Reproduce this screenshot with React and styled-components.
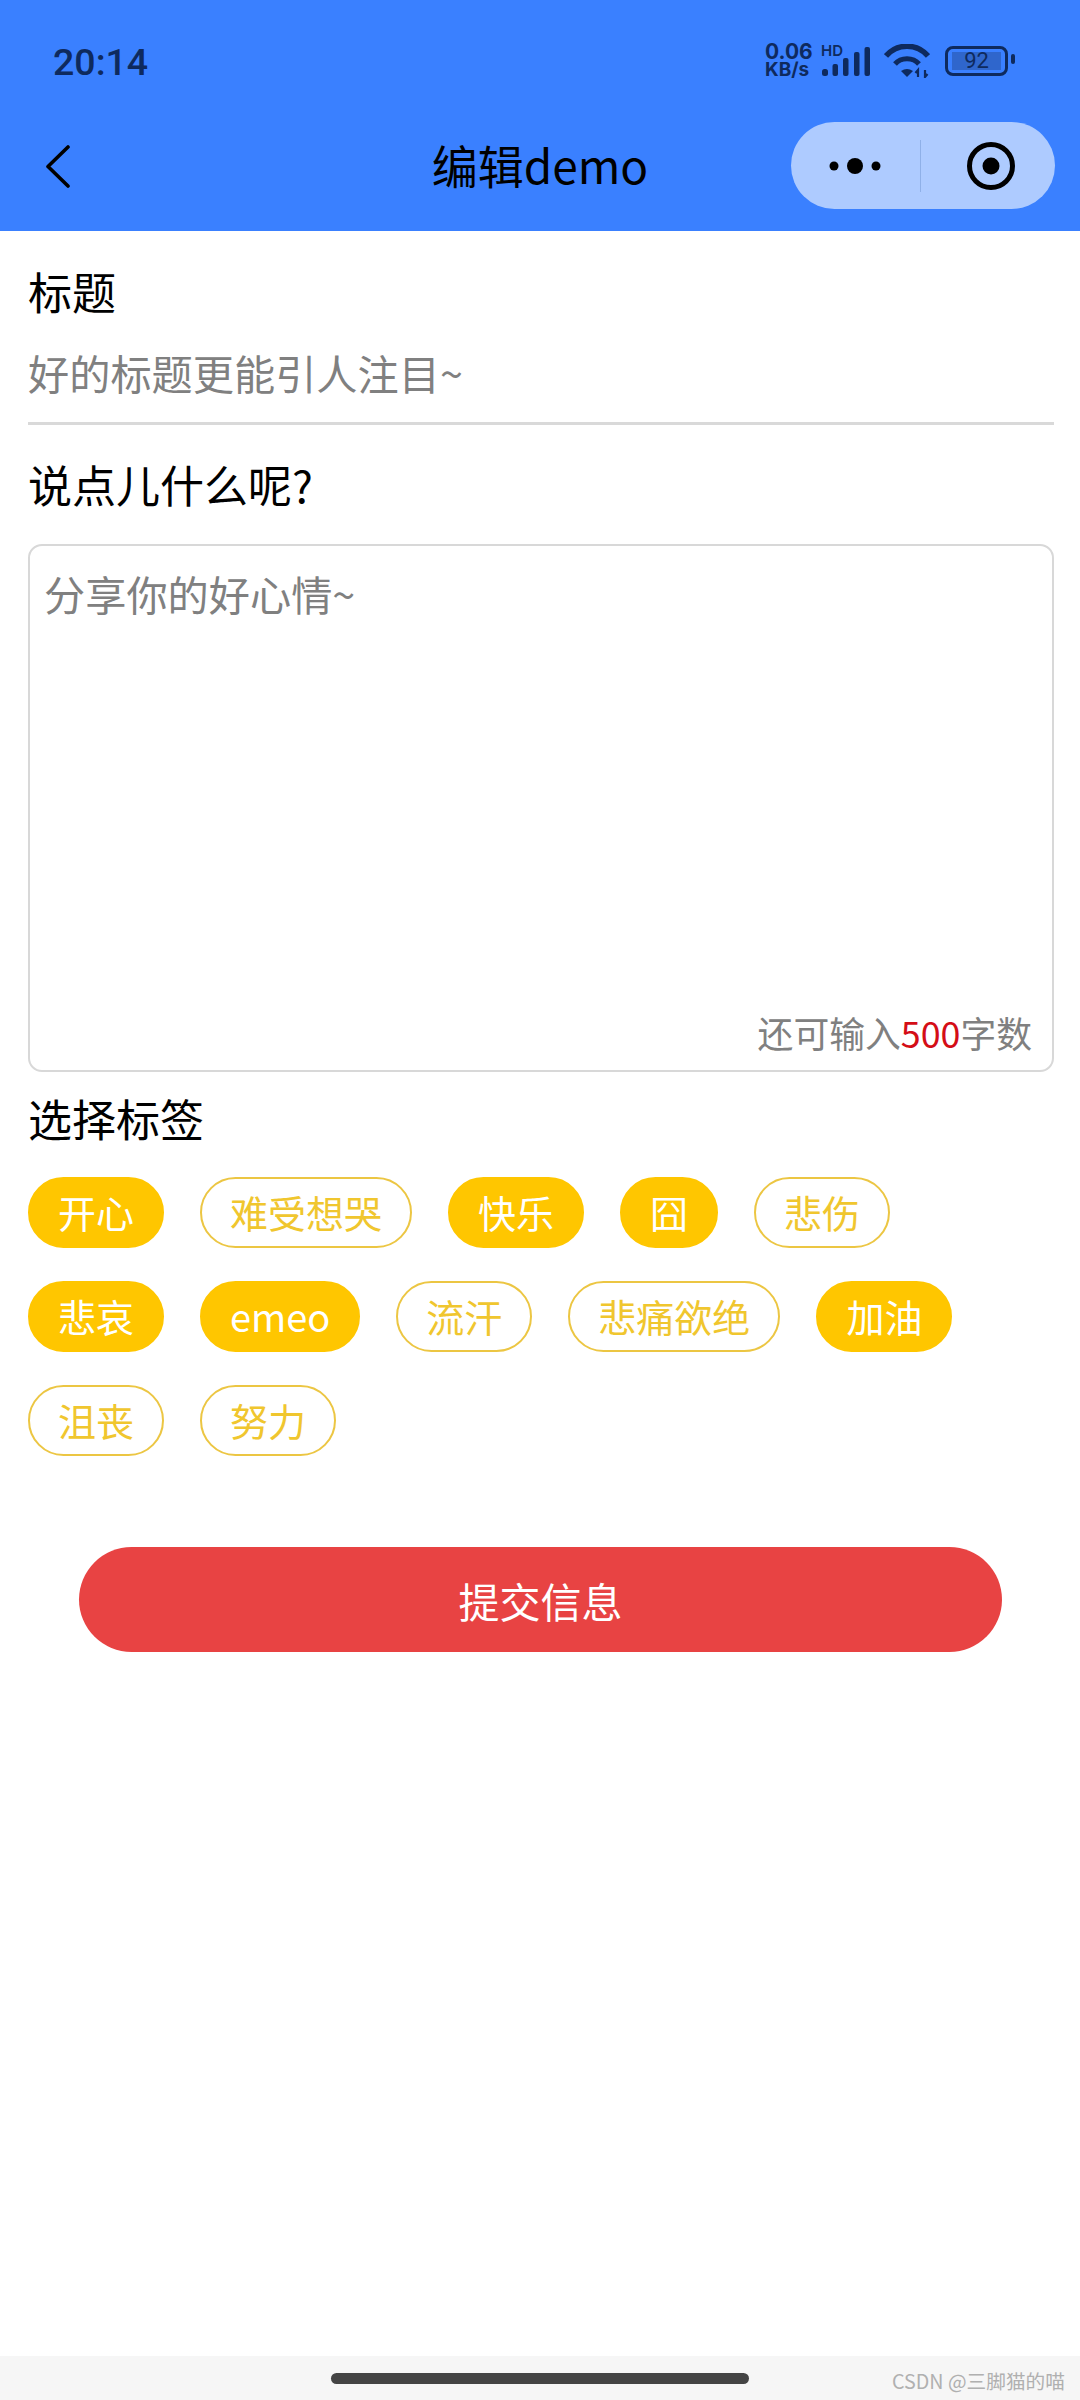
import React from 'react';
import styled, { createGlobalStyle } from 'styled-components';

const FONT = `"Noto Sans CJK SC", "Noto Sans", sans-serif`;
const NAVY = '#0e2a5e';

const GlobalStyle = createGlobalStyle`
  html, body {
    margin: 0;
    padding: 0;
    background: #fff;
  }
  * {
    box-sizing: border-box;
  }
`;

const Page = styled.div`
  width: 1080px;
  min-height: 2400px;
  display: flex;
  flex-direction: column;
  font-family: ${FONT};
  color: #000;
`;

const Header = styled.header`
  height: 231px;
  background: #3a80ff;
  display: flex;
  flex-direction: column;
`;

const StatusBar = styled.div`
  height: 122px;
  padding: 0 72px 0 53px;
  display: flex;
  align-items: center;
  justify-content: space-between;
  color: ${NAVY};
`;

const Time = styled.span`
  font-family: Roboto, sans-serif;
  font-size: 37.5px;
  font-weight: 500;
  line-height: 1;
  margin-top: 3px;
`;

const StatusIcons = styled.div`
  display: flex;
  align-items: center;
`;

const NetSpeed = styled.div`
  width: 50px;
  display: flex;
  flex-direction: column;
  font-family: Inter, sans-serif;
  font-weight: 700;
  line-height: 18px;
  font-size: 21px;
  margin-right: 6px;
  white-space: nowrap;
`;

const NetUnit = styled.span`
  font-size: 19px;
`;

const Battery = styled.div`
  position: relative;
  width: 63px;
  height: 30px;
  margin-left: 15px;
  border: 3px solid ${NAVY};
  border-radius: 8px;
  padding: 3px 4px;
  &::after {
    content: '';
    position: absolute;
    right: -10px;
    top: 5px;
    width: 4px;
    height: 10px;
    border-radius: 2px;
    background: ${NAVY};
  }
`;

const BatteryFill = styled.div`
  height: 100%;
  background: #2f66cc;
  display: flex;
  align-items: center;
  justify-content: center;
  font-family: Roboto, sans-serif;
  font-size: 22px;
  line-height: 1;
  color: ${NAVY};
`;

const NavBar = styled.nav`
  flex: 1;
  display: grid;
  grid-template-columns: 1fr auto 1fr;
  align-items: start;
  padding: 0 25px;
`;

const BackButton = styled.button`
  border: none;
  background: none;
  padding: 0;
  margin: 23px 0 0 21px;
  width: 24px;
  height: 43px;
  display: block;
`;

const Title = styled.h1`
  margin: 12px 0 0;
  font-size: 46px;
  font-weight: 400;
  line-height: 60px;
`;

const Capsule = styled.div`
  justify-self: end;
  width: 264px;
  height: 87px;
  border-radius: 44px;
  background: #aecbff;
  display: flex;
  align-items: center;
`;

const CapsuleSide = styled.div`
  flex: 1;
  display: flex;
  align-items: center;
  justify-content: center;
  & + & {
    height: 52px;
    padding-left: 6px;
    border-left: 1px solid #8fb0e8;
  }
`;

const Main = styled.main`
  flex: 1;
  padding: 0 26px 0 28px;
  display: flex;
  flex-direction: column;
`;

const Label = styled.div`
  font-size: 44px;
  line-height: 60px;
  margin-top: ${(p) => p.$top}px;
`;

const TitleInput = styled.input`
  display: block;
  width: 100%;
  height: 104px;
  padding: 1px 0 0;
  border: none;
  border-bottom: 3px solid #d9d9d9;
  outline: none;
  background: none;
  font-family: ${FONT};
  font-size: 41.2px;
  &::placeholder {
    color: #808080;
    opacity: 1;
  }
`;

const TextBox = styled.div`
  margin-top: 30px;
  height: 528px;
  border: 2px solid #d8d8d8;
  border-radius: 14px;
  display: flex;
  flex-direction: column;
  padding-bottom: 13px;
`;

const TextArea = styled.textarea`
  flex: 1;
  width: 100%;
  padding: 17px 14px 0;
  border: none;
  outline: none;
  resize: none;
  background: none;
  font-family: ${FONT};
  font-size: 41.2px;
  line-height: 60px;
  &::placeholder {
    color: #808080;
    opacity: 1;
  }
`;

const Counter = styled.div`
  text-align: right;
  padding-right: 20px;
  font-size: 35.8px;
  line-height: 50px;
  color: #808080;
`;

const CounterNum = styled.span`
  color: #d40d16;
`;

const TagList = styled.div`
  margin-top: 29px;
  display: flex;
  flex-wrap: wrap;
  gap: 33px 36px;
`;

const Tag = styled.span`
  height: 71px;
  padding: 0 28px;
  border-radius: 36px;
  border: 2px solid ${(p) => (p.$active ? '#ffc600' : '#ecc643')};
  background: ${(p) => (p.$active ? '#ffc600' : '#fff')};
  color: ${(p) => (p.$active ? '#fff' : '#f0c62e')};
  font-size: 38px;
  line-height: 65px;
`;

const SubmitButton = styled.button`
  display: block;
  width: 923px;
  height: 105px;
  margin: 91px 0 0 51px;
  border: none;
  border-radius: 53px;
  background: #e84343;
  color: #fff;
  font-family: ${FONT};
  font-size: 41px;
`;

const BottomBar = styled.footer`
  position: relative;
  height: 44px;
  background: #f6f6f6;
  display: flex;
  align-items: center;
  justify-content: center;
`;

const HomeHandle = styled.div`
  width: 418px;
  height: 11px;
  border-radius: 6px;
  background: #444;
`;

const Watermark = styled.span`
  position: absolute;
  right: 15px;
  top: 12px;
  font-size: 19.7px;
  line-height: 26px;
  color: #b0b0b0;
`;

const tags = [
  ['开心', true],
  ['难受想哭', false],
  ['快乐', true],
  ['囧', true],
  ['悲伤', false],
  ['悲哀', true],
  ['emeo', true],
  ['流汗', false],
  ['悲痛欲绝', false],
  ['加油', true],
  ['沮丧', false],
  ['努力', false],
];

const SignalIcon = () => (
  <svg width="50" height="40" viewBox="0 -6 50 40" fill={NAVY}>
    <text x="0" y="9" fontFamily="Inter, sans-serif" fontSize="15" fontWeight="600">HD</text>
    <rect x="1" y="22" width="6" height="7" rx="2.5" />
    <rect x="11.5" y="17" width="5.5" height="12" rx="2" />
    <rect x="22" y="11" width="5.5" height="18" rx="2" />
    <rect x="33" y="5" width="5.5" height="24" rx="2" />
    <rect x="43.5" y="0" width="5.5" height="29" rx="2" />
  </svg>
);

const WifiIcon = () => (
  <svg width="46" height="34" viewBox="0 0 46 34" fill="none" stroke={NAVY} strokeWidth="5.5" style={{ marginLeft: 13 }}>
    <path d="M2 12 C13 -1 33 -1 44 12" />
    <path d="M11 20 C17 13 29 13 35 20" strokeWidth="5" />
    <path d="M17 27 Q23 23 29 27 L23 33 Z" fill={NAVY} stroke="none" />
    <path d="M34 33 V26 L31.5 29 M41 26 V33 L43.5 30" strokeWidth="2.2" />
  </svg>
);

const BackIcon = () => (
  <svg width="24" height="43" viewBox="0 0 24 43" fill="none" stroke="#000" strokeWidth="3.6" strokeLinecap="round" strokeLinejoin="round">
    <path d="M22 2 L2 21.5 L22 41" />
  </svg>
);

const MoreIcon = () => (
  <svg width="54" height="18" viewBox="0 0 54 18" fill="#000">
    <circle cx="6" cy="9" r="4.5" />
    <circle cx="27" cy="9" r="8" />
    <circle cx="48" cy="9" r="4.5" />
  </svg>
);

const TargetIcon = () => (
  <svg width="50" height="50" viewBox="0 0 50 50">
    <circle cx="25" cy="25" r="21.5" fill="none" stroke="#000" strokeWidth="5" />
    <circle cx="25" cy="25" r="8.5" fill="#000" />
  </svg>
);

const App = () => (
  <Page>
    <GlobalStyle />
    <Header>
      <StatusBar>
        <Time>20:14</Time>
        <StatusIcons>
          <NetSpeed>
            <span>0.06</span>
            <NetUnit>KB/s</NetUnit>
          </NetSpeed>
          <SignalIcon />
          <WifiIcon />
          <Battery>
            <BatteryFill>92</BatteryFill>
          </Battery>
        </StatusIcons>
      </StatusBar>
      <NavBar>
        <BackButton aria-label="返回">
          <BackIcon />
        </BackButton>
        <Title>编辑demo</Title>
        <Capsule>
          <CapsuleSide>
            <MoreIcon />
          </CapsuleSide>
          <CapsuleSide>
            <TargetIcon />
          </CapsuleSide>
        </Capsule>
      </NavBar>
    </Header>
    <Main>
      <Label $top={30}>标题</Label>
      <TitleInput placeholder="好的标题更能引人注目~" />
      <Label $top={29}>说点儿什么呢?</Label>
      <TextBox>
        <TextArea placeholder="分享你的好心情~" />
        <Counter>
          还可输入<CounterNum>500</CounterNum>字数
        </Counter>
      </TextBox>
      <Label $top={16}>选择标签</Label>
      <TagList>
        {tags.map(([name, active]) => (
          <Tag key={name} $active={active}>{name}</Tag>
        ))}
      </TagList>
      <SubmitButton>提交信息</SubmitButton>
    </Main>
    <BottomBar>
      <HomeHandle />
      <Watermark>CSDN @三脚猫的喵</Watermark>
    </BottomBar>
  </Page>
);

export default App;
